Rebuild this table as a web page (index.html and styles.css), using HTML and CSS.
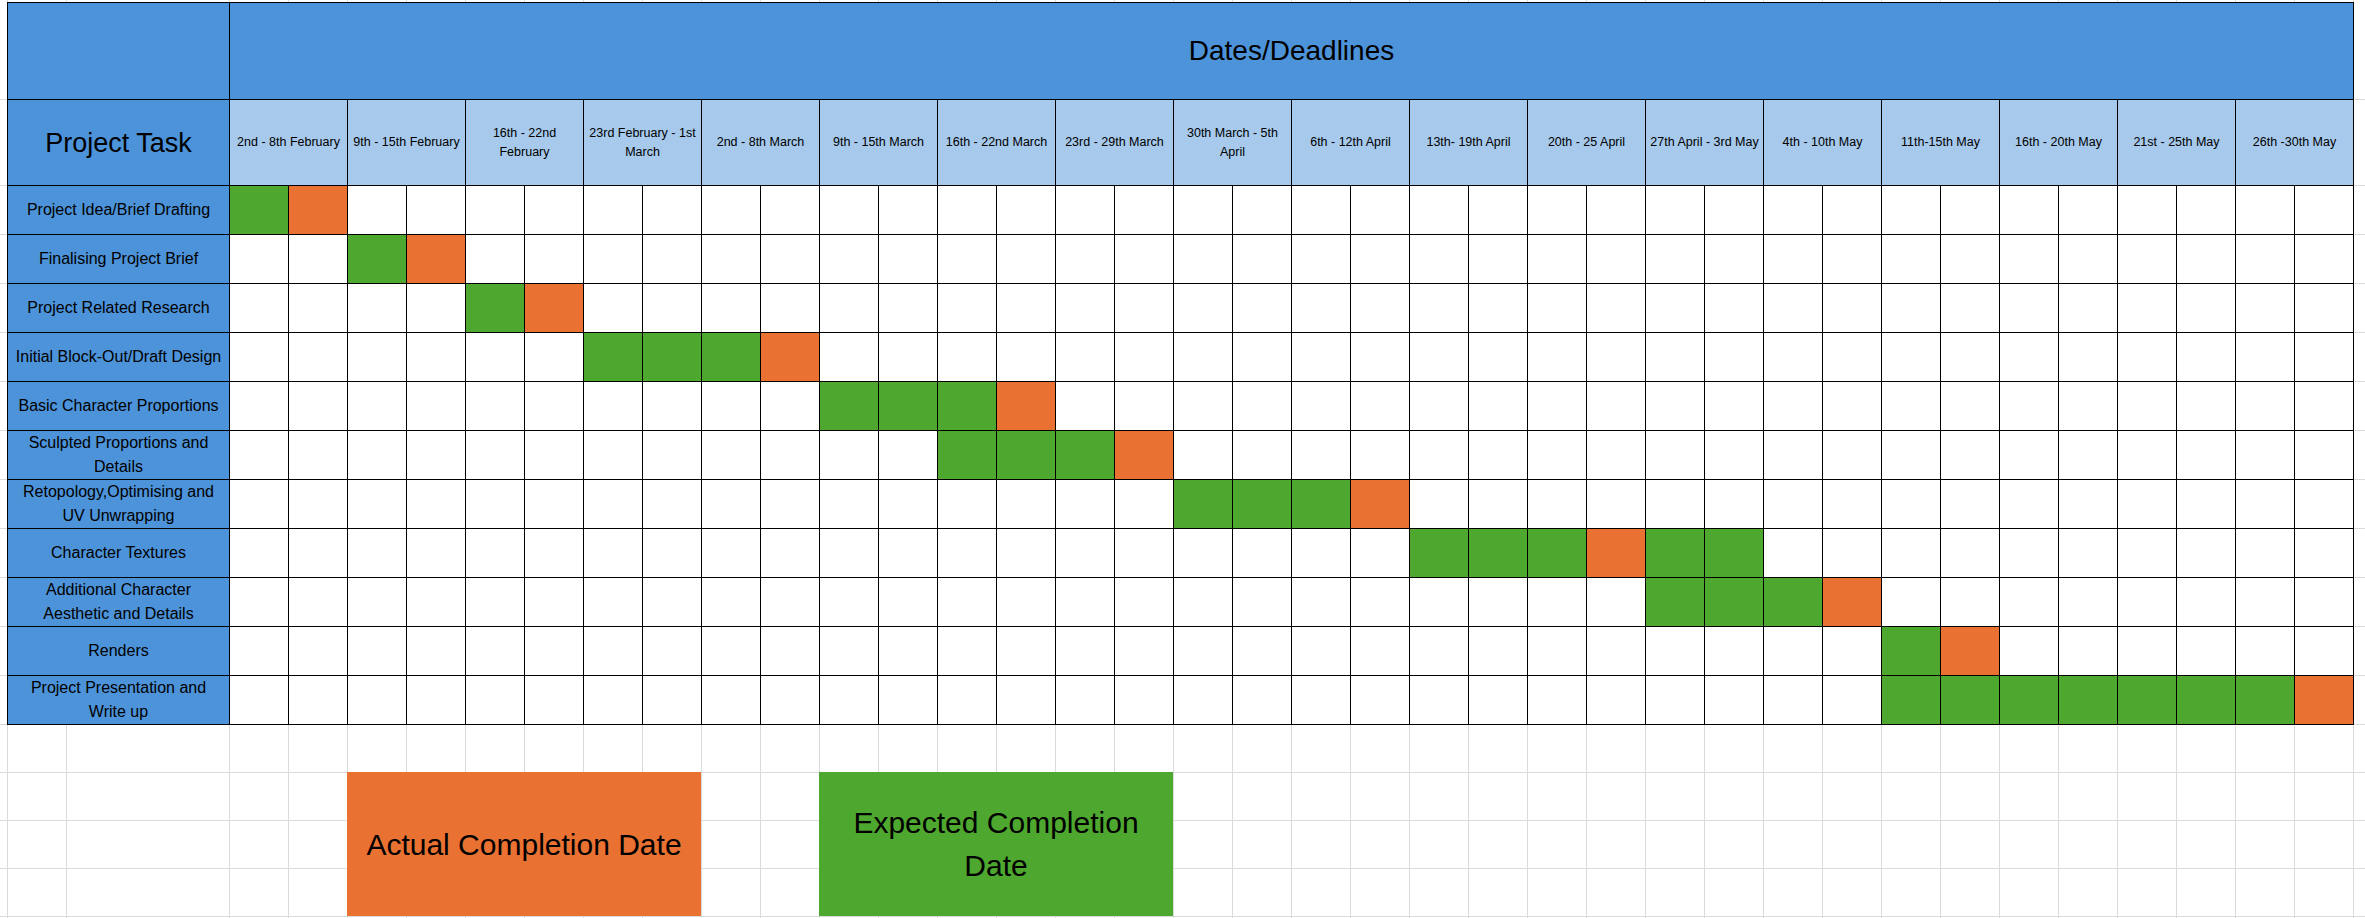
FILE: index.html
```html
<!DOCTYPE html>
<html lang="en">
<head>
<meta charset="utf-8">
<title>Project Gantt Chart</title>
<link rel="stylesheet" href="styles.css">
</head>
<body>
<div class="sheet">
  <div class="top">
    <div class="side">
      <div></div><div></div><div></div><div></div><div></div><div></div><div></div><div></div><div></div><div></div><div></div><div></div><div></div>
    </div>
    <div class="chart">
      <div class="corner"></div>
      <div class="title">Dates/Deadlines</div>
      <div class="task-head">Project Task</div>
      <div class="week">2nd - 8th February</div>
      <div class="week">9th - 15th February</div>
      <div class="week">16th - 22nd<br>February</div>
      <div class="week">23rd February - 1st<br>March</div>
      <div class="week">2nd - 8th March</div>
      <div class="week">9th - 15th March</div>
      <div class="week">16th - 22nd March</div>
      <div class="week">23rd - 29th March</div>
      <div class="week">30th March - 5th<br>April</div>
      <div class="week">6th - 12th April</div>
      <div class="week">13th- 19th April</div>
      <div class="week">20th - 25 April</div>
      <div class="week">27th April - 3rd May</div>
      <div class="week">4th - 10th May</div>
      <div class="week">11th-15th May</div>
      <div class="week">16th - 20th May</div>
      <div class="week">21st - 25th May</div>
      <div class="week">26th -30th May</div>

      <div class="task">Project Idea/Brief Drafting</div>
      <div class="c g"></div><div class="c o"></div><div class="c"></div><div class="c"></div><div class="c"></div><div class="c"></div><div class="c"></div><div class="c"></div><div class="c"></div><div class="c"></div><div class="c"></div><div class="c"></div><div class="c"></div><div class="c"></div><div class="c"></div><div class="c"></div><div class="c"></div><div class="c"></div><div class="c"></div><div class="c"></div><div class="c"></div><div class="c"></div><div class="c"></div><div class="c"></div><div class="c"></div><div class="c"></div><div class="c"></div><div class="c"></div><div class="c"></div><div class="c"></div><div class="c"></div><div class="c"></div><div class="c"></div><div class="c"></div><div class="c"></div><div class="c"></div>

      <div class="task">Finalising Project Brief</div>
      <div class="c"></div><div class="c"></div><div class="c g"></div><div class="c o"></div><div class="c"></div><div class="c"></div><div class="c"></div><div class="c"></div><div class="c"></div><div class="c"></div><div class="c"></div><div class="c"></div><div class="c"></div><div class="c"></div><div class="c"></div><div class="c"></div><div class="c"></div><div class="c"></div><div class="c"></div><div class="c"></div><div class="c"></div><div class="c"></div><div class="c"></div><div class="c"></div><div class="c"></div><div class="c"></div><div class="c"></div><div class="c"></div><div class="c"></div><div class="c"></div><div class="c"></div><div class="c"></div><div class="c"></div><div class="c"></div><div class="c"></div><div class="c"></div>

      <div class="task">Project Related Research</div>
      <div class="c"></div><div class="c"></div><div class="c"></div><div class="c"></div><div class="c g"></div><div class="c o"></div><div class="c"></div><div class="c"></div><div class="c"></div><div class="c"></div><div class="c"></div><div class="c"></div><div class="c"></div><div class="c"></div><div class="c"></div><div class="c"></div><div class="c"></div><div class="c"></div><div class="c"></div><div class="c"></div><div class="c"></div><div class="c"></div><div class="c"></div><div class="c"></div><div class="c"></div><div class="c"></div><div class="c"></div><div class="c"></div><div class="c"></div><div class="c"></div><div class="c"></div><div class="c"></div><div class="c"></div><div class="c"></div><div class="c"></div><div class="c"></div>

      <div class="task">Initial Block-Out/Draft Design</div>
      <div class="c"></div><div class="c"></div><div class="c"></div><div class="c"></div><div class="c"></div><div class="c"></div><div class="c g"></div><div class="c g"></div><div class="c g"></div><div class="c o"></div><div class="c"></div><div class="c"></div><div class="c"></div><div class="c"></div><div class="c"></div><div class="c"></div><div class="c"></div><div class="c"></div><div class="c"></div><div class="c"></div><div class="c"></div><div class="c"></div><div class="c"></div><div class="c"></div><div class="c"></div><div class="c"></div><div class="c"></div><div class="c"></div><div class="c"></div><div class="c"></div><div class="c"></div><div class="c"></div><div class="c"></div><div class="c"></div><div class="c"></div><div class="c"></div>

      <div class="task">Basic Character Proportions</div>
      <div class="c"></div><div class="c"></div><div class="c"></div><div class="c"></div><div class="c"></div><div class="c"></div><div class="c"></div><div class="c"></div><div class="c"></div><div class="c"></div><div class="c g"></div><div class="c g"></div><div class="c g"></div><div class="c o"></div><div class="c"></div><div class="c"></div><div class="c"></div><div class="c"></div><div class="c"></div><div class="c"></div><div class="c"></div><div class="c"></div><div class="c"></div><div class="c"></div><div class="c"></div><div class="c"></div><div class="c"></div><div class="c"></div><div class="c"></div><div class="c"></div><div class="c"></div><div class="c"></div><div class="c"></div><div class="c"></div><div class="c"></div><div class="c"></div>

      <div class="task">Sculpted Proportions and<br>Details</div>
      <div class="c"></div><div class="c"></div><div class="c"></div><div class="c"></div><div class="c"></div><div class="c"></div><div class="c"></div><div class="c"></div><div class="c"></div><div class="c"></div><div class="c"></div><div class="c"></div><div class="c g"></div><div class="c g"></div><div class="c g"></div><div class="c o"></div><div class="c"></div><div class="c"></div><div class="c"></div><div class="c"></div><div class="c"></div><div class="c"></div><div class="c"></div><div class="c"></div><div class="c"></div><div class="c"></div><div class="c"></div><div class="c"></div><div class="c"></div><div class="c"></div><div class="c"></div><div class="c"></div><div class="c"></div><div class="c"></div><div class="c"></div><div class="c"></div>

      <div class="task">Retopology,Optimising and<br>UV Unwrapping</div>
      <div class="c"></div><div class="c"></div><div class="c"></div><div class="c"></div><div class="c"></div><div class="c"></div><div class="c"></div><div class="c"></div><div class="c"></div><div class="c"></div><div class="c"></div><div class="c"></div><div class="c"></div><div class="c"></div><div class="c"></div><div class="c"></div><div class="c g"></div><div class="c g"></div><div class="c g"></div><div class="c o"></div><div class="c"></div><div class="c"></div><div class="c"></div><div class="c"></div><div class="c"></div><div class="c"></div><div class="c"></div><div class="c"></div><div class="c"></div><div class="c"></div><div class="c"></div><div class="c"></div><div class="c"></div><div class="c"></div><div class="c"></div><div class="c"></div>

      <div class="task">Character Textures</div>
      <div class="c"></div><div class="c"></div><div class="c"></div><div class="c"></div><div class="c"></div><div class="c"></div><div class="c"></div><div class="c"></div><div class="c"></div><div class="c"></div><div class="c"></div><div class="c"></div><div class="c"></div><div class="c"></div><div class="c"></div><div class="c"></div><div class="c"></div><div class="c"></div><div class="c"></div><div class="c"></div><div class="c g"></div><div class="c g"></div><div class="c g"></div><div class="c o"></div><div class="c g"></div><div class="c g"></div><div class="c"></div><div class="c"></div><div class="c"></div><div class="c"></div><div class="c"></div><div class="c"></div><div class="c"></div><div class="c"></div><div class="c"></div><div class="c"></div>

      <div class="task">Additional Character<br>Aesthetic and Details</div>
      <div class="c"></div><div class="c"></div><div class="c"></div><div class="c"></div><div class="c"></div><div class="c"></div><div class="c"></div><div class="c"></div><div class="c"></div><div class="c"></div><div class="c"></div><div class="c"></div><div class="c"></div><div class="c"></div><div class="c"></div><div class="c"></div><div class="c"></div><div class="c"></div><div class="c"></div><div class="c"></div><div class="c"></div><div class="c"></div><div class="c"></div><div class="c"></div><div class="c g"></div><div class="c g"></div><div class="c g"></div><div class="c o"></div><div class="c"></div><div class="c"></div><div class="c"></div><div class="c"></div><div class="c"></div><div class="c"></div><div class="c"></div><div class="c"></div>

      <div class="task">Renders</div>
      <div class="c"></div><div class="c"></div><div class="c"></div><div class="c"></div><div class="c"></div><div class="c"></div><div class="c"></div><div class="c"></div><div class="c"></div><div class="c"></div><div class="c"></div><div class="c"></div><div class="c"></div><div class="c"></div><div class="c"></div><div class="c"></div><div class="c"></div><div class="c"></div><div class="c"></div><div class="c"></div><div class="c"></div><div class="c"></div><div class="c"></div><div class="c"></div><div class="c"></div><div class="c"></div><div class="c"></div><div class="c"></div><div class="c g"></div><div class="c o"></div><div class="c"></div><div class="c"></div><div class="c"></div><div class="c"></div><div class="c"></div><div class="c"></div>

      <div class="task">Project Presentation and<br>Write up</div>
      <div class="c"></div><div class="c"></div><div class="c"></div><div class="c"></div><div class="c"></div><div class="c"></div><div class="c"></div><div class="c"></div><div class="c"></div><div class="c"></div><div class="c"></div><div class="c"></div><div class="c"></div><div class="c"></div><div class="c"></div><div class="c"></div><div class="c"></div><div class="c"></div><div class="c"></div><div class="c"></div><div class="c"></div><div class="c"></div><div class="c"></div><div class="c"></div><div class="c"></div><div class="c"></div><div class="c"></div><div class="c"></div><div class="c g"></div><div class="c g"></div><div class="c g"></div><div class="c g"></div><div class="c g"></div><div class="c g"></div><div class="c g"></div><div class="c o"></div>
    </div>
    <div class="side side-right">
      <div></div><div></div><div></div><div></div><div></div><div></div><div></div><div></div><div></div><div></div><div></div><div></div><div></div>
    </div>
  </div>
  <div class="below">
    <div class="legend legend-actual">Actual Completion Date</div>
    <div class="legend legend-expected">Expected Completion<br>Date</div>
  </div>
</div>
</body>
</html>
```
FILE: styles.css
```css
html, body {
  margin: 0;
  padding: 0;
  overflow: hidden;
  background: #fff;
}

body {
  width: 2365px;
  height: 918px;
  font-family: "Liberation Sans", Arial, sans-serif;
  color: #000;
}

.sheet {
  height: 918px;
  display: flex;
  flex-direction: column;
  background:
    linear-gradient(#dadada, #dadada) 7px 0 / 1px 100% no-repeat,
    linear-gradient(#dadada, #dadada) 66px 0 / 1px 100% no-repeat,
    repeating-linear-gradient(to right, #dadada 0 1px, transparent 1px 59px) 229px 0 / 2125px 100% no-repeat,
    #fff;
}

.top {
  display: flex;
  padding-top: 2px;
}

.side {
  width: 7px;
  display: grid;
  grid-template-rows: 97px 85px repeat(11, 48px);
  row-gap: 1px;
  padding-bottom: 1px;
  background: #dadada;
}

.side > div {
  background: #fff;
}

.side-right {
  flex: 1;
}

.chart {
  display: grid;
  grid-template-columns: 221px repeat(36, 58px);
  grid-template-rows: 96px 85px repeat(11, 48px);
  gap: 1px;
  padding: 1px;
  background: #000;
}

.corner {
  background: #4d93d9;
}

.title {
  grid-column: span 36;
  background: #4d93d9;
  display: flex;
  align-items: center;
  justify-content: center;
  font-size: 28px;
}

.task-head {
  background: #4d93d9;
  display: flex;
  align-items: center;
  justify-content: center;
  font-size: 27px;
  padding-top: 2px;
}

.week {
  grid-column: span 2;
  background: #a6c9ec;
  display: flex;
  align-items: center;
  justify-content: center;
  text-align: center;
  font-size: 12.5px;
  line-height: 19px;
  white-space: nowrap;
}

.task {
  background: #4d93d9;
  display: flex;
  align-items: center;
  justify-content: center;
  text-align: center;
  font-size: 16px;
  line-height: 24px;
  white-space: nowrap;
}

.c {
  background: #fff;
}

.c.g {
  background: #4ea72e;
}

.c.o {
  background: #e97132;
}

.below {
  flex: 1;
  min-height: 0;
  overflow: hidden;
  display: grid;
  grid-template-columns: 7px 59px 163px repeat(36, 59px) 1fr;
  grid-template-rows: 47px 48px 48px 48px 1fr;
  background: repeating-linear-gradient(to bottom, transparent 0 47px, #dadada 47px 48px);
}

.legend {
  grid-row: 2 / span 3;
  display: flex;
  align-items: center;
  justify-content: center;
  text-align: center;
  font-size: 30px;
  line-height: 43px;
}

.legend-actual {
  grid-column: 6 / span 6;
  background: #e97132;
}

.legend-expected {
  grid-column: 14 / span 6;
  background: #4ea72e;
}
```
